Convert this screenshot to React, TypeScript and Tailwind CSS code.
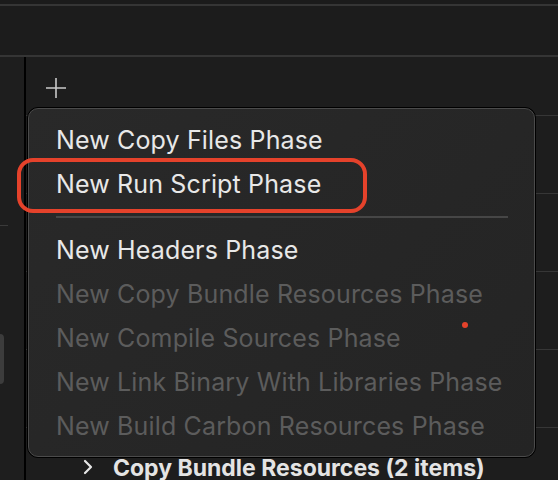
import React from "react";

const enabled = ["New Copy Files Phase", "New Run Script Phase"];
const lower: { t: string; on: boolean }[] = [
  { t: "New Headers Phase", on: true },
  { t: "New Copy Bundle Resources Phase", on: false },
  { t: "New Compile Sources Phase", on: false },
  { t: "New Link Binary With Libraries Phase", on: false },
  { t: "New Build Carbon Resources Phase", on: false },
];

export default function App() {
  return (
    <div
      className="relative w-[558px] h-[480px] overflow-hidden bg-[#1d1d1d] flex flex-col"
      style={{ fontFamily: "Inter, 'Noto Sans', sans-serif" }}
    >
      {/* top toolbar area */}
      <div className="h-[4px] bg-[#1b1b1b]" />
      <div className="h-[2px] bg-[#353535]" />
      <div className="h-[54px] bg-[#1c1c1c]" />
      <div className="h-[2px] bg-[#353535]" />

      <div className="flex flex-1">
        {/* left panel */}
        <div className="w-[24px] bg-[#1e1e1e] flex flex-col">
          <div className="h-[168px]" />
          <div className="h-[1px] w-[8px] bg-[#3a3a3a]" />
          <div className="h-[108px]" />
          <div className="h-[50px] w-[4px] rounded-r-[4px] bg-[#3c3c3c]" />
        </div>
        <div className="w-[2px] bg-black" />

        {/* main area */}
        <div className="flex-1 flex flex-col">
          <div className="h-[58px] pl-[19px] pt-[20px]">
            <svg width="22" height="22" viewBox="0 0 22 22">
              <path d="M11 1 V21 M1 11 H21" stroke="#c9c9c9" strokeWidth="1.6" />
            </svg>
          </div>
          <div className="h-[78px] border-t border-[#363636]" />
          <div className="h-[78px] border-t border-[#363636]" />
          <div className="h-[78px] border-t border-[#363636]" />
          <div className="h-[78px] border-t border-[#363636]" />
          <div className="flex-1 border-t border-[#363636] flex items-start pt-[28px]">
            <svg className="ml-[56px] mt-[3px]" width="12" height="16" viewBox="0 0 12 16">
              <path d="M3 2 L9 8 L3 14" stroke="#e6e6e6" strokeWidth="2.2" fill="none" strokeLinecap="round" strokeLinejoin="round" />
            </svg>
            <span className="ml-[19px] text-[23px] font-bold text-[#e4e4e4] leading-[24px] whitespace-nowrap">
              Copy Bundle Resources (2 items)
            </span>
          </div>
        </div>
      </div>

      {/* popup menu */}
      <div className="absolute left-[27px] top-[107px] w-[509px] h-[351px] rounded-[11px] border border-black bg-black">
        <div className="w-full h-full rounded-[10px] border-[1.5px] border-[#4b4b4b] bg-[linear-gradient(135deg,#292929,#242424)] pt-[9px] pb-[8px] flex flex-col">
          {enabled.map((t) => (
            <div key={t} className="h-[44px] pl-[27px] text-[25px] tracking-[0.15px] leading-[44px] text-[#e8e8e8] whitespace-nowrap">
              {t}
            </div>
          ))}
          <div className="h-[22px] flex items-center pl-[27px] pr-[26px]">
            <div className="h-[2px] w-full bg-[#464646]" />
          </div>
          {lower.map((r) => (
            <div
              key={r.t}
              className={
                "h-[44px] pl-[27px] text-[25px] tracking-[0.15px] leading-[44px] whitespace-nowrap " +
                (r.on ? "text-[#e8e8e8]" : "text-[#5c5c5c]")
              }
            >
              {r.t}
            </div>
          ))}
        </div>
      </div>

      {/* red annotation */}
      <div className="absolute left-[17px] top-[158px] w-[350px] h-[55px] rounded-[16px] border-[4px] border-[#e5422b]" />
      <div className="absolute left-[462px] top-[322px] w-[6px] h-[6px] rounded-full bg-[#e5422b]" />
    </div>
  );
}
